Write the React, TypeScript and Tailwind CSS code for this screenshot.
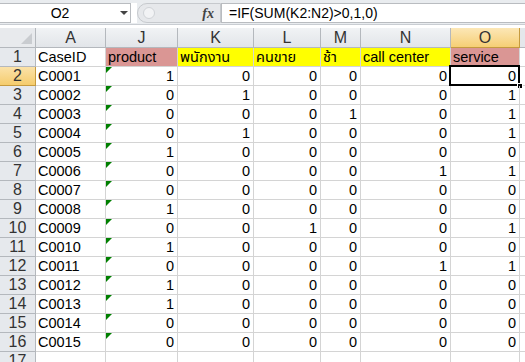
import React from "react";

const cols = [
  { key: "A", w: 70 },
  { key: "J", w: 72 },
  { key: "K", w: 76 },
  { key: "L", w: 67 },
  { key: "M", w: 40 },
  { key: "N", w: 90 },
  { key: "O", w: 69 },
];

const data: [string, number, number, number, number, number, number][] = [
  ["C0001", 1, 0, 0, 0, 0, 0],
  ["C0002", 0, 1, 0, 0, 0, 1],
  ["C0003", 0, 0, 0, 1, 0, 1],
  ["C0004", 0, 1, 0, 0, 0, 1],
  ["C0005", 1, 0, 0, 0, 0, 0],
  ["C0006", 0, 0, 0, 0, 1, 1],
  ["C0007", 0, 0, 0, 0, 0, 0],
  ["C0008", 1, 0, 0, 0, 0, 0],
  ["C0009", 0, 0, 1, 0, 0, 1],
  ["C0010", 1, 0, 0, 0, 0, 0],
  ["C0011", 0, 0, 0, 0, 1, 1],
  ["C0012", 1, 0, 0, 0, 0, 0],
  ["C0013", 1, 0, 0, 0, 0, 0],
  ["C0014", 0, 0, 0, 0, 0, 0],
  ["C0015", 0, 0, 0, 0, 0, 0],
];

const font = { fontFamily: '"Liberation Sans", "Noto Sans Thai", "Noto Sans", sans-serif' };

function Triangle() {
  return (
    <svg className="absolute left-0 top-0" width="6" height="6" viewBox="0 0 6 6">
      <polygon points="0,0 6,0 0,6" fill="#008000" />
    </svg>
  );
}

export default function App() {
  const template = "36px 70px 72px 76px 67px 40px 90px 69px 1fr";
  return (
    <div className="w-[525px] h-[362px] overflow-hidden bg-white text-black" style={font}>
      {/* Formula bar */}
      <div className="h-[25px] bg-[#e9ecef] flex items-stretch pt-[3px] border-b border-[#c9cdd2]">
        <div className="w-[131px] h-[20px] bg-white border border-[#b9bcc0] border-l-0 flex items-center relative">
          <span className="flex-1 text-center text-[14px] pr-[10px]">O2</span>
          <svg className="absolute right-[2px] top-[7px]" width="8" height="5" viewBox="0 0 8 5">
            <polygon points="0,0 8,0 4,4" fill="#444" />
          </svg>
        </div>
        <div className="w-[6px] h-[20px] bg-white" />
        <div className="w-[84px] h-[20px] bg-[#e6e8eb] border border-[#c6c9cd] rounded-l-[10px] relative flex items-center justify-end pr-[6px]">
          <div className="absolute left-[5px] top-[3px] w-[12px] h-[12px] rounded-full bg-[#f2f3f5] border border-[#d0d3d7]" />
          <span className="italic font-bold text-[14px] text-[#444]" style={{ fontFamily: '"Liberation Serif", serif' }}>
            fx
          </span>
        </div>
        <div className="flex-1 h-[20px] bg-white border border-[#b9bcc0] border-r-0 flex items-center pl-[7px] text-[14px]">
          =IF(SUM(K2:N2)&gt;0,1,0)
        </div>
      </div>
      <div className="h-[3px] bg-white" />

      {/* Grid */}
      <div className="grid" style={{ gridTemplateColumns: template }}>
        {/* Header row */}
        <div className="h-[20px] bg-[#e8eaed] border-r border-b border-[#b4b8bd] relative">
          <svg className="absolute right-[3px] bottom-[3px]" width="11" height="11" viewBox="0 0 11 11">
            <polygon points="11,0 11,11 0,11" fill="#c9ccd0" />
          </svg>
        </div>
        {cols.map((c) =>
          c.key === "O" ? (
            <div
              key={c.key}
              className="h-[20px] bg-gradient-to-b from-[#fce7b6] to-[#f6cf74] border-r border-b border-[#c69b3f] flex items-center justify-center text-[16px] text-[#333]"
            >
              {c.key}
            </div>
          ) : (
            <div
              key={c.key}
              className="h-[20px] bg-gradient-to-b from-[#f1f3f5] to-[#e2e5e9] border-r border-b border-[#b4b8bd] flex items-center justify-center text-[16px] text-[#333]"
            >
              {c.key}
            </div>
          )
        )}
        <div className="h-[20px] bg-[#e4e7eb] border-b border-[#b4b8bd]" />

        {/* Row 1 */}
        <div className="h-[19px] bg-[#e6e9ed] border-r border-b border-[#b4b8bd] flex items-center justify-center text-[16px] text-[#333]">
          1
        </div>
        <div className="h-[19px] border-r border-b border-[#d4d4d4] px-[2px] text-[14.5px] leading-[18px]">CaseID</div>
        <div className="h-[19px] bg-[#da9694] border-r border-b border-[#d4d4d4] px-[2px] text-[14.5px] leading-[18px]">product</div>
        <div className="h-[19px] bg-[#ffff00] border-r border-b border-[#d4d4d4] px-[2px] text-[14.5px] leading-[18px] whitespace-nowrap overflow-hidden">พนักงาน</div>
        <div className="h-[19px] bg-[#ffff00] border-r border-b border-[#d4d4d4] px-[2px] text-[14.5px] leading-[18px] whitespace-nowrap overflow-hidden">คนขาย</div>
        <div className="h-[19px] bg-[#ffff00] border-r border-b border-[#d4d4d4] px-[2px] text-[14.5px] leading-[18px] whitespace-nowrap overflow-hidden">ช้า</div>
        <div className="h-[19px] bg-[#ffff00] border-r border-b border-[#d4d4d4] px-[2px] text-[14.5px] leading-[18px] whitespace-nowrap overflow-hidden">call center</div>
        <div className="h-[19px] bg-[#da9694] border-r border-b border-[#d4d4d4] px-[2px] text-[14.5px] leading-[18px]">service</div>
        <div className="h-[19px] border-b border-[#d4d4d4]" />

        {data.map((row, i) => {
          const r = i + 2;
          const [id, ...nums] = row;
          return (
            <React.Fragment key={r}>
              <div
                className={
                  r === 2
                    ? "h-[19px] bg-gradient-to-b from-[#fbe2a8] to-[#f5cc6c] border-r border-b border-[#c69b3f] flex items-center justify-center text-[16px] text-[#333]"
                    : "h-[19px] bg-[#e6e9ed] border-r border-b border-[#b4b8bd] flex items-center justify-center text-[16px] text-[#333]"
                }
              >
                {r}
              </div>
              <div className="h-[19px] border-r border-b border-[#d4d4d4] px-[2px] text-[14.5px] leading-[18px]">{id}</div>
              {nums.map((n, j) => (
                <div
                  key={j}
                  className="h-[19px] border-r border-b border-[#d4d4d4] px-[3px] text-[14.5px] leading-[18px] text-right relative"
                >
                  {j === 0 && <Triangle />}
                  {n}
                  {j === 5 && r === 2 && (
                    <>
                      <div className="absolute left-[-2px] top-[-2px] right-[-1px] bottom-[-1px] border-2 border-black" />
                      <div className="absolute right-[-4px] bottom-[-4px] w-[6px] h-[6px] bg-black border border-white" />
                    </>
                  )}
                </div>
              ))}
              <div className="h-[19px] border-b border-[#d4d4d4]" />
            </React.Fragment>
          );
        })}

        {/* Row 17 */}
        <div className="h-[19px] bg-[#e6e9ed] border-r border-b border-[#b4b8bd] flex items-center justify-center text-[16px] text-[#333]">
          17
        </div>
        {cols.map((c) => (
          <div key={c.key} className="h-[19px] border-r border-b border-[#d4d4d4]" />
        ))}
        <div className="h-[19px] border-b border-[#d4d4d4]" />
      </div>
    </div>
  );
}
